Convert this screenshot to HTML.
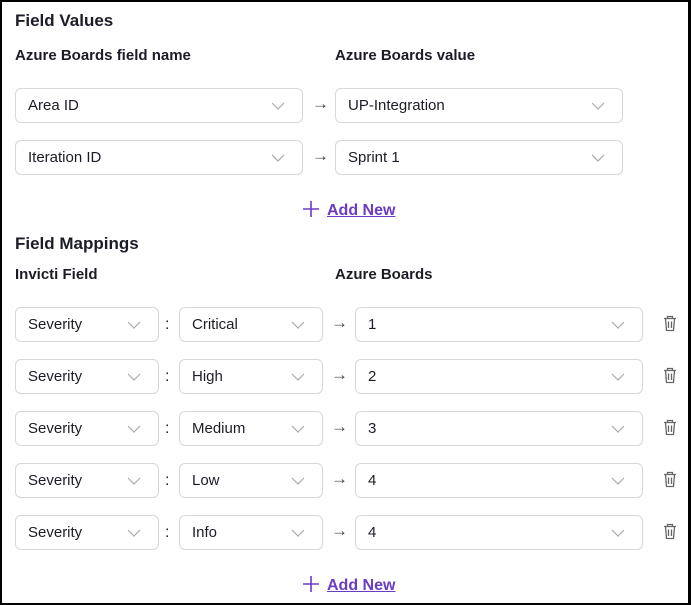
<!DOCTYPE html>
<html><head><style>
*{margin:0;padding:0;box-sizing:border-box}
body{width:691px;height:605px;background:#000;position:relative;overflow:hidden;font-family:"Liberation Sans",sans-serif;color:#1c1c28}
#p{position:absolute;left:2px;top:2px;width:686px;height:601px;background:#fff}
.a{position:absolute}
.h{font-weight:bold;font-size:17px}
.l{font-weight:bold;font-size:15px}
.s{position:absolute;height:35px;border:1px solid #d7d7dc;border-radius:6px;background:#fff;font-size:15px;line-height:34px;padding-left:12px}
.s svg{position:absolute;right:17px;top:13px}
.ar{position:absolute;font-size:17px;font-weight:bold;color:#444}
.add{position:absolute;color:#6a3cc3;font-weight:bold;font-size:16px}
.add u{text-decoration:underline}
.t{position:absolute}
</style></head><body><div id="p"></div>
<div class="a h" style="left:15px;top:11px">Field Values</div>
<div class="a l" style="left:15px;top:47px">Azure Boards field name</div>
<div class="a l" style="left:335px;top:47px">Azure Boards value</div>

<div class="s" style="left:15px;top:88px;width:288px">Area ID<svg width="14" height="9"><path d="M1 1l6 6 6-6" fill="none" stroke="#aaa" stroke-width="1.2"/></svg></div>
<div class="ar" style="left:312px;top:94px">→</div>
<div class="s" style="left:335px;top:88px;width:288px">UP-Integration<svg width="14" height="9"><path d="M1 1l6 6 6-6" fill="none" stroke="#aaa" stroke-width="1.2"/></svg></div>
<div class="s" style="left:15px;top:140px;width:288px">Iteration ID<svg width="14" height="9"><path d="M1 1l6 6 6-6" fill="none" stroke="#aaa" stroke-width="1.2"/></svg></div>
<div class="ar" style="left:312px;top:146px">→</div>
<div class="s" style="left:335px;top:140px;width:288px">Sprint 1<svg width="14" height="9"><path d="M1 1l6 6 6-6" fill="none" stroke="#aaa" stroke-width="1.2"/></svg></div>

<div class="add" style="left:303px;top:201px"><svg width="16" height="16" style="vertical-align:-2px;margin-right:8px"><path d="M8 0v16M0 8h16" stroke="#6a3cc3" stroke-width="1.6"/></svg><u>Add New</u></div>

<div class="a h" style="left:15px;top:234px">Field Mappings</div>
<div class="a l" style="left:15px;top:266px">Invicti Field</div>
<div class="a l" style="left:335px;top:266px">Azure Boards</div>

<div id="rows"></div>
<script>
var d=[["Critical","1"],["High","2"],["Medium","3"],["Low","4"],["Info","4"]];
var chev='<svg width="14" height="9"><path d="M1 1l6 6 6-6" fill="none" stroke="#aaa" stroke-width="1.2"/></svg>';
var h='';
d.forEach(function(r,i){var y=307+i*52;
h+='<div class="s" style="left:15px;top:'+y+'px;width:144px">Severity'+chev+'</div>';
h+='<div class="ar" style="left:165px;top:'+(y+9)+'px;font-size:16px;font-weight:normal;color:#222">:</div>';
h+='<div class="s" style="left:179px;top:'+y+'px;width:144px">'+r[0]+chev+'</div>';
h+='<div class="ar" style="left:331px;top:'+(y+6)+'px">→</div>';
h+='<div class="s" style="left:355px;top:'+y+'px;width:288px">'+r[1]+chev+'</div>';
h+='<svg class="t" style="left:663px;top:'+(y+8)+'px" width="14" height="17"><path d="M1 3.5h12M4.5 3.5V1.5h5v2M2.5 3.5l1 12h7l1-12M5.5 6.5v6.5M8.5 6.5v6.5" fill="none" stroke="#666" stroke-width="1.3"/></svg>';
});
document.getElementById('rows').innerHTML=h;
</script>
<div class="add" style="left:303px;top:576px"><svg width="16" height="16" style="vertical-align:-2px;margin-right:8px"><path d="M8 0v16M0 8h16" stroke="#6a3cc3" stroke-width="1.6"/></svg><u>Add New</u></div>
</body></html>
